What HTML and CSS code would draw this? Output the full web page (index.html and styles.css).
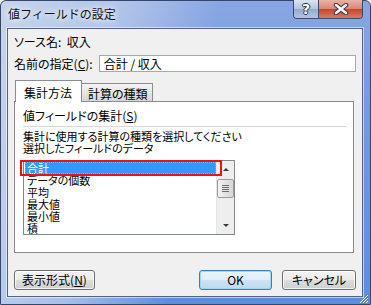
FILE: index.html
```html
<!DOCTYPE html>
<html lang="ja">
<head>
  <meta charset="UTF-8">
  <title>値フィールドの設定</title>
  <link rel="stylesheet" href="styles.css">
</head>
<body>

  <div class="window">
    <div class="titlebar">
      <span class="title">値フィールドの設定</span>
      <div class="caption-buttons">
        <span class="cap-btn help">?</span>
        <span class="cap-btn close">
          <svg width="18" height="12" viewBox="0 0 18 12">
            <path d="M4 2 L14 10 M14 2 L4 10" stroke="#3a3a4a" stroke-width="4.5" stroke-linecap="round"/>
            <path d="M4 2 L14 10 M14 2 L4 10" stroke="#ffffff" stroke-width="2.5" stroke-linecap="round"/>
          </svg>
        </span>
      </div>
    </div>

    <div class="client">
      <div class="source">ソース名:&nbsp; 収入</div>

      <div class="name-row">
        <span class="name-label">名前の指定(<u>C</u>):</span>
        <div class="name-input">合計 / 収入</div>
      </div>

      <div class="tabs">
        <span class="tab active">集計方法</span>
        <span class="tab">計算の種類</span>
      </div>

      <div class="panel">
        <div class="group-title">値フィールドの集計(<u>S</u>)</div>
        <div class="sep"></div>
        <div class="desc">集計に使用する計算の種類を選択してください<br>選択したフィールドのデータ</div>

        <div class="listbox">
          <ul class="items">
            <li class="selected"><span>合計</span></li>
            <li>データの個数</li>
            <li>平均</li>
            <li>最大値</li>
            <li>最小値</li>
            <li>積</li>
          </ul>
          <div class="scrollbar">
            <div class="sb-btn"><span class="arrow up"></span></div>
            <div class="sb-thumb">
              <span></span><span></span><span></span><span></span>
            </div>
            <div class="sb-track"></div>
            <div class="sb-btn"><span class="arrow down"></span></div>
          </div>
          <div class="mark"></div>
        </div>
      </div>

      <div class="buttons">
        <button class="btn format">表示形式(<u>N</u>)</button>
        <button class="btn ok">OK</button>
        <button class="btn cancel">キャンセル</button>
      </div>
    </div>

    <svg class="grip" width="12" height="12" viewBox="0 0 12 12">
      <path d="M11 3 L3 11 M11 6 L6 11 M11 9 L9 11" stroke="#ffffff" stroke-width="1"/>
      <path d="M12 3 L3 12 M12 6 L6 12 M12 9 L9 12" stroke="#6a7a90" stroke-width="1"/>
    </svg>
  </div>

</body>
</html>
```

FILE: styles.css
```css
body {
  margin: 0;
  font-family: "Noto Sans CJK JP", sans-serif;
  font-size: 12px;
  font-feature-settings: "palt";
  color: #000;
  background: #fff;
}
.window {
  position: relative;
  width: 371px;
  height: 305px;
  box-sizing: border-box;
  display: flex;
  flex-direction: column;
  border: 1px solid #34466a;
  border-radius: 6px 6px 0 0;
  background:
    linear-gradient(100deg, rgba(202,215,234,0.95) 0%, rgba(192,208,236,0.75) 28%, rgba(150,180,232,0) 52%),
    linear-gradient(180deg, #88a6e2 0%, #7799e0 35%, #5b8de3 100%);
}
.titlebar {
  height: 27px;
  display: flex;
  justify-content: space-between;
  align-items: flex-start;
}
.title {
  margin: 6px 0 0 7px;
  line-height: 14px;
  font-size: 12px;
  font-feature-settings: normal;
  color: #111;
  text-shadow: 0 0 5px #fff, 0 0 8px rgba(255,255,255,0.8);
}
.caption-buttons {
  display: flex;
  margin: -1px 7px 0 0;
  border: 1px solid #3b4c6b;
  border-top: none;
  border-radius: 0 0 4px 4px;
  overflow: hidden;
}
.cap-btn {
  height: 18px;
  display: flex;
  align-items: center;
  justify-content: center;
  box-sizing: border-box;
}
.help {
  width: 25px;
  border-right: 1px solid #3b4c6b;
  background: linear-gradient(#dbe4f1, #b4c4df 50%, #93a9d0 50%, #b3c5e3);
  font-family: "DejaVu Sans", sans-serif;
  font-weight: bold;
  font-size: 14px;
  color: #fff;
  text-shadow: 1px 0 0 #333, -1px 0 0 #333, 0 1px 0 #333, 0 -1px 0 #333;
}
.close {
  width: 43px;
  background: linear-gradient(#eab2a6, #d98573 50%, #c4432c 50%, #d67b64);
}
.client {
  height: 269px;
  margin: 0 7px 0 6px;
  box-sizing: border-box;
  display: flex;
  flex-direction: column;
  padding: 6px;
  background: #f0f0f0;
  border: 1px solid #55647e;
  box-shadow: 0 0 0 1px rgba(255,255,255,0.55);
}
.source {
  line-height: 14px;
}
.name-row {
  display: flex;
  align-items: center;
  margin-top: 6px;
  height: 17px;
}
.name-label {
  width: 85px;
}
.name-input {
  width: 258px;
  height: 17px;
  box-sizing: border-box;
  padding-left: 4px;
  line-height: 15px;
  background: #fff;
  border: 1px solid #a3a9b3;
}
.tabs {
  display: flex;
  align-items: flex-end;
  height: 21px;
  margin-top: 8px;
  padding-left: 1px;
}
.tab {
  height: 18px;
  box-sizing: border-box;
  padding: 3px 0 0 6px;
  width: 71px;
  line-height: 14px;
  border: 1px solid #898c95;
  border-bottom: none;
  background: linear-gradient(#f4f4f4, #e6e6e6 50%, #d6d6d6);
}
.tab.active {
  position: relative;
  z-index: 1;
  width: 67px;
  height: 22px;
  margin-bottom: -1px;
  padding: 5px 0 0 8px;
  background: #fff;
}
.tab + .tab {
  border-left: none;
}
.panel {
  width: 340px;
  height: 152px;
  box-sizing: border-box;
  padding: 7px 6px 0 8px;
  background: #fff;
  border: 1px solid #898c95;
}
.group-title {
  line-height: 14px;
}
.sep {
  height: 1px;
  margin-top: 3px;
  background: #d5d8e2;
}
.desc {
  margin-top: 3px;
  font-size: 11px;
  line-height: 12px;
}
.listbox {
  position: relative;
  display: flex;
  width: 212px;
  height: 75px;
  margin-top: 6px;
  box-sizing: border-box;
  border: 1px solid #828790;
}
.items {
  flex: 1;
  list-style: none;
  margin: 0;
  padding: 1px 0 0 1px;
  font-size: 11px;
}
.items li {
  height: 12px;
  line-height: 12px;
  padding-left: 2px;
  white-space: nowrap;
}
.items li.selected {
  background: #3399ff;
  color: #fff;
  outline: 1px dotted #d7a050;
  outline-offset: -1px;
}
.scrollbar {
  width: 17px;
  display: flex;
  flex-direction: column;
  background: #eeeeee;
  border-left: 1px solid #e6e6e6;
}
.sb-btn {
  height: 17px;
  display: flex;
  align-items: center;
  justify-content: center;
}
.arrow {
  width: 0;
  height: 0;
  border-left: 3px solid transparent;
  border-right: 3px solid transparent;
}
.arrow.up {
  border-bottom: 3px solid #3a3a3a;
}
.arrow.down {
  border-top: 3px solid #3a3a3a;
}
.sb-thumb {
  height: 19px;
  margin: 1px 0 0 0;
  box-sizing: border-box;
  border: 1px solid #9b9b9b;
  border-radius: 2px;
  background: linear-gradient(90deg, #f3f3f3, #e3e3e3 50%, #d6d6d6);
  display: flex;
  flex-direction: column;
  justify-content: center;
  align-items: center;
  gap: 1px;
}
.sb-thumb span {
  width: 7px;
  height: 1px;
  background: #6e6e6e;
}
.sb-track {
  flex: 1;
}
.mark {
  position: absolute;
  left: -4px;
  top: -1px;
  width: 202px;
  height: 16px;
  box-sizing: border-box;
  border: 2px solid #ee1111;
}
.buttons {
  display: flex;
  margin-top: auto;
}
.btn {
  height: 20px;
  padding: 0;
  font-family: "Noto Sans CJK JP", sans-serif;
  font-size: 12px;
  font-feature-settings: "palt";
  line-height: 16px;
  color: #000;
  border: 1px solid #707070;
  border-radius: 3px;
  background: linear-gradient(#f2f2f2, #ebebeb 50%, #dddddd 50%, #cfcfcf);
  box-shadow: inset 0 0 0 1px rgba(255,255,255,0.7);
}
.format {
  width: 81px;
}
.ok {
  width: 73px;
  margin-left: auto;
  border-color: #3c7fb1;
  box-shadow: inset 0 0 0 1px #9fd5f2;
  background: linear-gradient(#eaf4fa, #dfeef8 50%, #cde4f3 50%, #bcdaef);
}
.cancel {
  width: 74px;
  margin-left: 10px;
}
.grip {
  position: absolute;
  right: 1px;
  bottom: 0;
}
```
